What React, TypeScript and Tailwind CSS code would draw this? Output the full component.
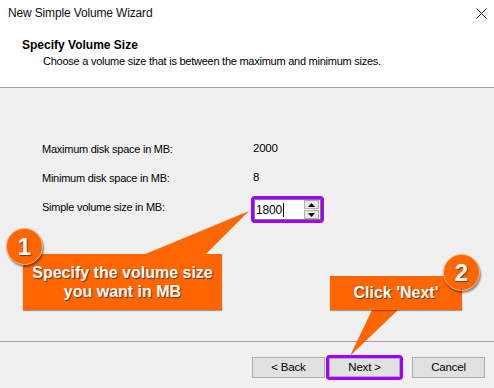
import React from "react";

const font = { fontFamily: '"Liberation Sans", Arial, sans-serif' };

function SpinBox() {
  return (
    <div className="flex h-[27px] w-[73px] rounded-[4px] border-[3px] border-[#a100ff] bg-white">
      <div className="flex flex-1 items-center border border-[#7a7a7a] bg-white pl-[1px] text-[12px] tracking-[-0.2px] text-black">
        <span>1800</span>
        <span className="ml-[1px] inline-block h-[14px] w-[1px] bg-black" />
        <div className="ml-auto flex h-full w-[16px] flex-col justify-center gap-[1px] pr-[1px]">
          <div className="flex h-[9px] items-center justify-center border border-[#adadad] bg-[#e8e8e8]">
            <svg width="7" height="4" viewBox="0 0 7 4"><path d="M0 4 L3.5 0 L7 4 Z" fill="#000" /></svg>
          </div>
          <div className="flex h-[9px] items-center justify-center border border-[#adadad] bg-[#e8e8e8]">
            <svg width="7" height="4" viewBox="0 0 7 4"><path d="M0 0 L3.5 4 L7 0 Z" fill="#000" /></svg>
          </div>
        </div>
      </div>
    </div>
  );
}

function Btn({ children }: { children: React.ReactNode }) {
  return (
    <div className="flex h-[21px] w-[73px] items-center justify-center border border-[#adadad] bg-[#e1e1e1] text-[11.5px] tracking-[-0.2px] text-black">
      {children}
    </div>
  );
}

export default function App() {
  return (
    <div className="relative h-[388px] w-[494px] overflow-hidden bg-[#f0f0f0] text-black" style={font}>
      {/* Header (white) */}
      <div className="flex h-[88px] flex-col border-b border-[#a0a0a0] bg-white">
        <div className="flex h-[26px] items-center justify-between pl-[8px] pr-[7px]">
          <span className="text-[12px] tracking-[-0.15px] text-[#111]">New Simple Volume Wizard</span>
          <svg width="11" height="11" viewBox="0 0 11 11">
            <path d="M0.5 0.5 L10.5 10.5 M10.5 0.5 L0.5 10.5" stroke="#222" strokeWidth="1" />
          </svg>
        </div>
        <div className="pl-[22px] pt-[11px]">
          <div className="text-[12px] font-bold leading-[16px]">Specify Volume Size</div>
          <div className="pl-[21px] text-[11px] leading-[16px] tracking-[-0.25px]">Choose a volume size that is between the maximum and minimum sizes.</div>
        </div>
      </div>

      {/* Content */}
      <div className="flex h-[254px] flex-col border-b border-[#a0a0a0] pl-[42px] pt-[53px] text-[11px] tracking-[-0.25px]">
        <div className="flex h-[16px] items-center">
          <span className="w-[211px]">Maximum disk space in MB:</span>
          <span className="text-[11.5px]">2000</span>
        </div>
        <div className="mt-[13px] flex h-[16px] items-center">
          <span className="w-[211px]">Minimum disk space in MB:</span>
          <span className="text-[11.5px]">8</span>
        </div>
        <div className="mt-[10px] flex items-start">
          <span className="mt-[3px] w-[209px] leading-[16px]">Simple volume size in MB:</span>
          <SpinBox />
        </div>
      </div>

      {/* Buttons */}
      <div className="flex items-center pl-[252px] pt-[13px]">
        <Btn>&lt; Back</Btn>
        <div className="ml-[1px] flex h-[25px] w-[77px] items-center justify-center rounded-[4px] border-[3px] border-[#a100ff]">
          <div className="flex h-full w-full items-center justify-center border border-[#adadad] bg-[#e1e1e1] text-[11.5px] tracking-[-0.2px]">
            Next &gt;
          </div>
        </div>
        <div className="ml-[9px]">
          <Btn>Cancel</Btn>
        </div>
      </div>

      {/* Callout tails */}
      <svg className="pointer-events-none absolute left-0 top-0" width="494" height="388" viewBox="0 0 494 388">
        <path d="M143 255 L249 211 L205 255 Z" fill="#ff6600" />
        <path d="M372 310 L350 356 L398 310 Z" fill="#ff6600" />
      </svg>

      {/* Callout 1 */}
      <div className="absolute left-[23px] top-[254px] flex h-[56px] w-[199px] flex-col items-center justify-center bg-[#ff6600] text-[16px] font-bold leading-[19px] text-white shadow-[0_1px_1px_rgba(0,0,0,0.35)] [text-shadow:1px_1px_1px_rgba(0,0,0,0.55)]">
        <span>Specify the volume size</span>
        <span>you want in MB</span>
      </div>
      <div className="absolute left-[6px] top-[228px] flex h-[37px] w-[37px] items-center justify-center rounded-full border border-[#ffb27a] bg-[#ff6600] text-[24px] font-bold text-white shadow-[1px_2px_2px_rgba(0,0,0,0.45)] [text-shadow:1px_1px_1px_rgba(0,0,0,0.5)]">
        1
      </div>

      {/* Callout 2 */}
      <div className="absolute left-[330px] top-[276px] flex h-[34px] w-[132px] items-center justify-center bg-[#ff6600] text-[16px] font-bold text-white shadow-[0_1px_1px_rgba(0,0,0,0.35)] [text-shadow:1px_1px_1px_rgba(0,0,0,0.55)]">
        Click 'Next'
      </div>
      <div className="absolute left-[443px] top-[254px] flex h-[37px] w-[37px] items-center justify-center rounded-full border border-[#ffb27a] bg-[#ff6600] text-[24px] font-bold text-white shadow-[1px_2px_2px_rgba(0,0,0,0.45)] [text-shadow:1px_1px_1px_rgba(0,0,0,0.5)]">
        2
      </div>
    </div>
  );
}
